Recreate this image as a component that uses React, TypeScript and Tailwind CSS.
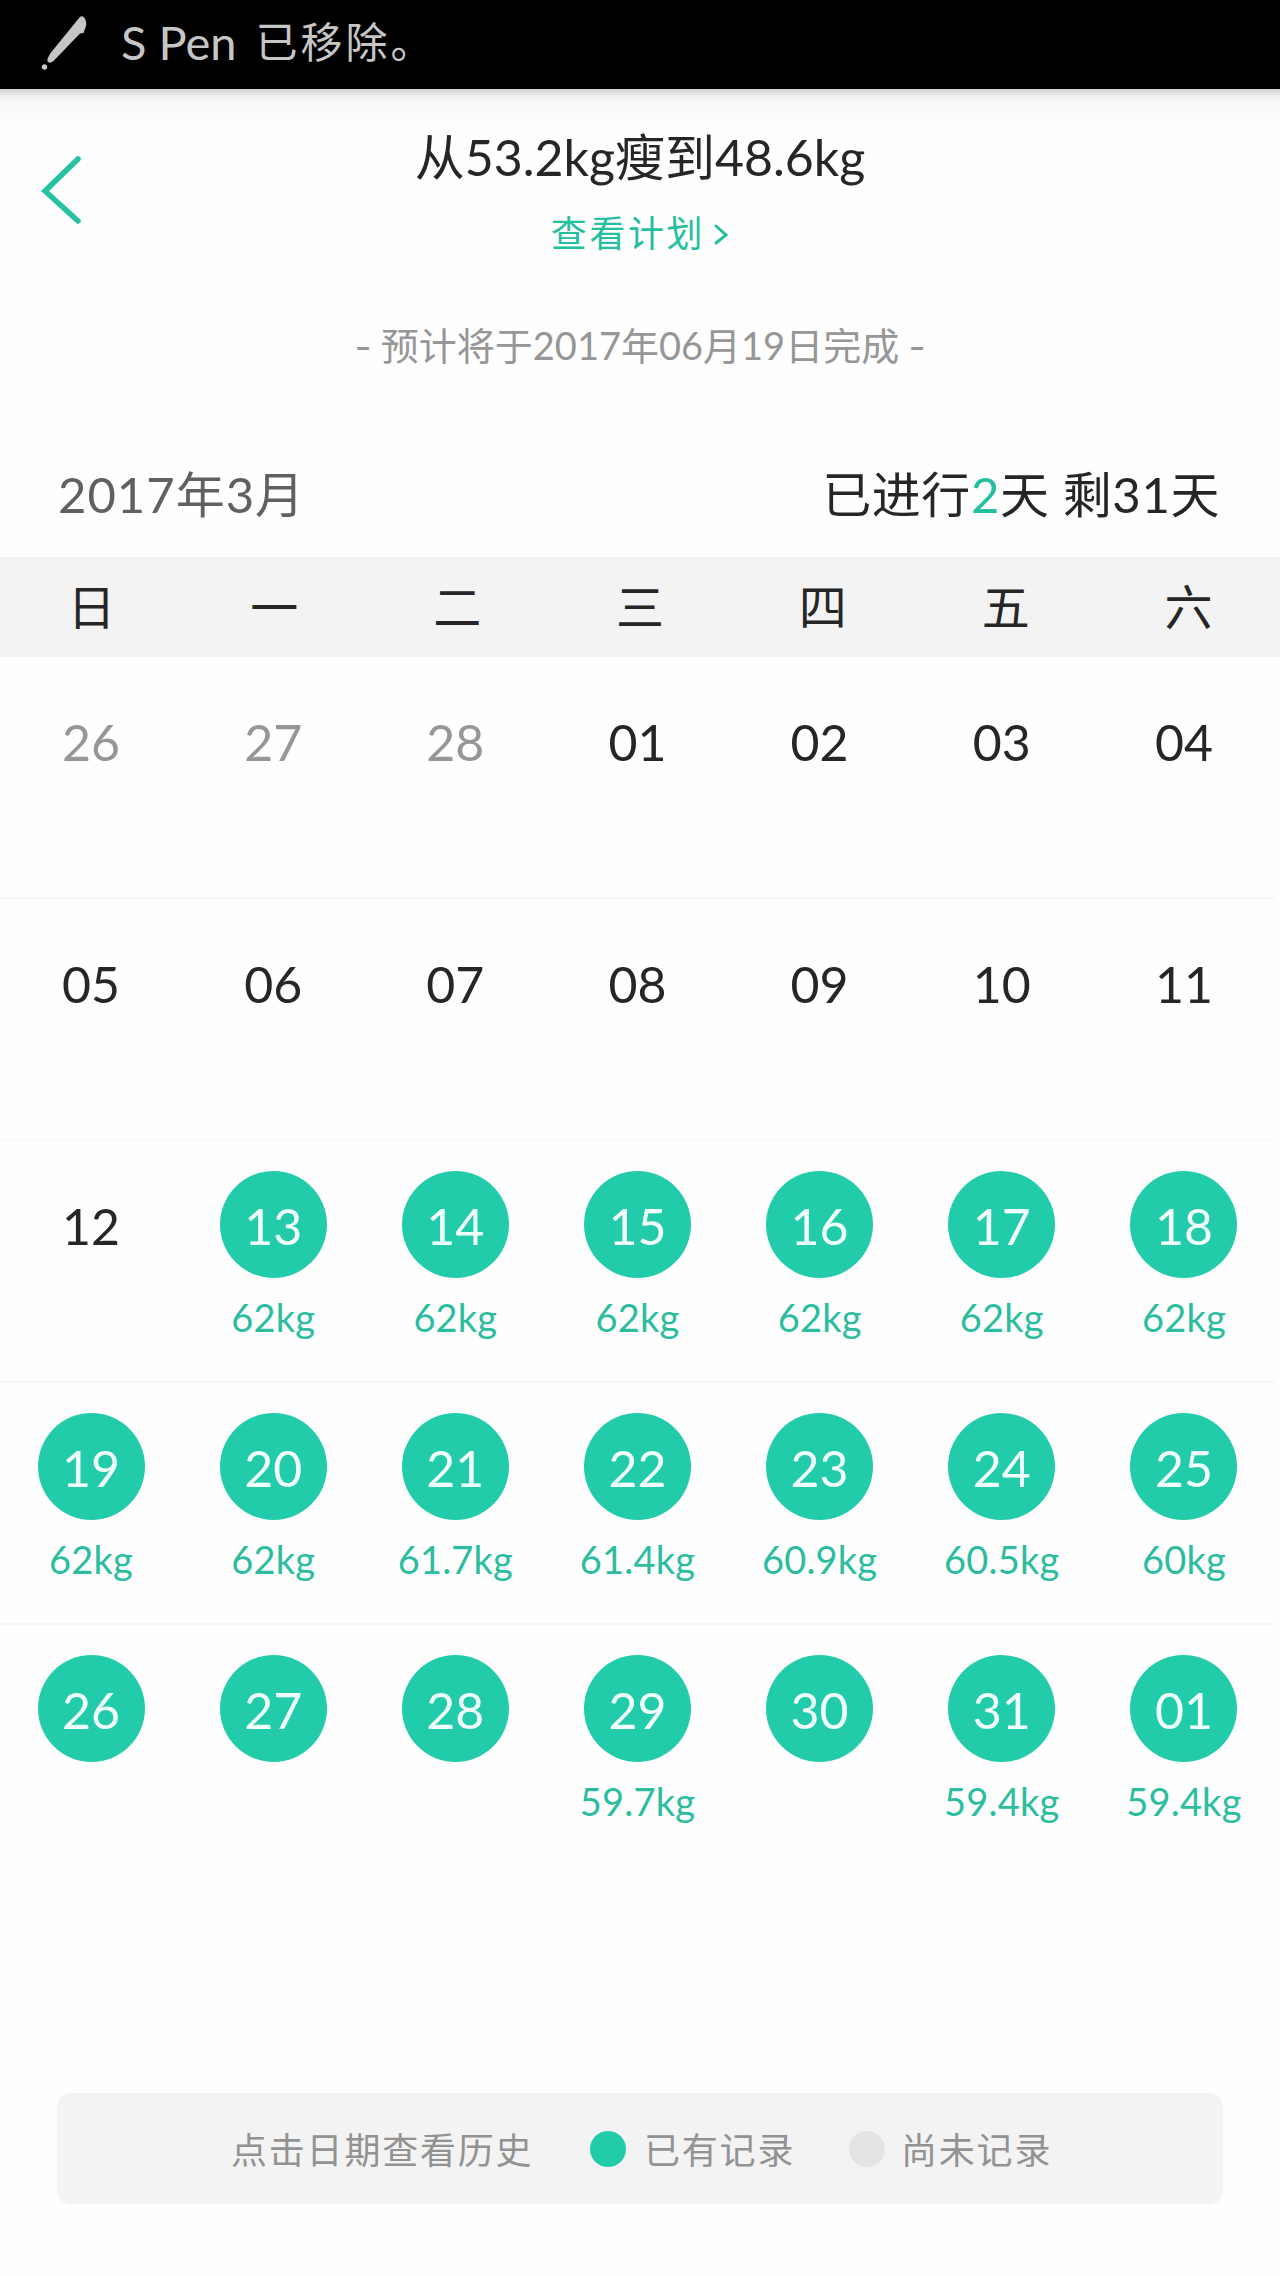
type Day = { d: string; kg?: string; done?: boolean; muted?: boolean };

const weekdays = ['日', '一', '二', '三', '四', '五', '六'];

const weeks: Day[][] = [
    [
        { d: '26', muted: true }, { d: '27', muted: true }, { d: '28', muted: true },
        { d: '01' }, { d: '02' }, { d: '03' }, { d: '04' },
    ],
    [{ d: '05' }, { d: '06' }, { d: '07' }, { d: '08' }, { d: '09' }, { d: '10' }, { d: '11' }],
    [
        { d: '12' },
        { d: '13', kg: '62kg', done: true }, { d: '14', kg: '62kg', done: true },
        { d: '15', kg: '62kg', done: true }, { d: '16', kg: '62kg', done: true },
        { d: '17', kg: '62kg', done: true }, { d: '18', kg: '62kg', done: true },
    ],
    [
        { d: '19', kg: '62kg', done: true }, { d: '20', kg: '62kg', done: true },
        { d: '21', kg: '61.7kg', done: true }, { d: '22', kg: '61.4kg', done: true },
        { d: '23', kg: '60.9kg', done: true }, { d: '24', kg: '60.5kg', done: true },
        { d: '25', kg: '60kg', done: true },
    ],
    [
        { d: '26', done: true }, { d: '27', done: true }, { d: '28', done: true },
        { d: '29', kg: '59.7kg', done: true }, { d: '30', done: true },
        { d: '31', kg: '59.4kg', done: true }, { d: '01', kg: '59.4kg', done: true },
    ],
];

const dividers = ['border-[#f6f6f6]', 'border-[#fbfbfb]', 'border-[#f6f6f6]', 'border-[#f6f6f6]', 'border-transparent'];

function StatusBar() {
    return (
        <div className="h-[89px] bg-black flex items-start text-[#c6c6c6]">
            <svg className="w-[50px] h-[56px] mt-[15px] ml-[40px]" viewBox="0 0 50 56" fill="currentColor">
                <path d="M39.500 2.500 Q42 0 44 2.500 Q47 6 46 11 L43.500 18 L40 18.500 L13.500 46 Q10 49 7.500 46.500 Q7 43 11 37.500 Z" />
                <circle cx="4.500" cy="52" r="2.700" />
            </svg>
            <div className="flex items-center h-[84px] ml-[31px] leading-none whitespace-nowrap">
                <span className="text-[47px]">S Pen</span>
                <span className="text-[42px] tracking-[3px] ml-[19px]">已移除。</span>
            </div>
        </div>
    );
}

function DayCell({ day }: { day: Day }) {
    const color = day.done ? 'bg-[#22ccaa] text-[#f0fffb]' : day.muted ? 'text-[#969696]' : 'text-[#262626]';
    return (
        <div className="flex flex-col items-center pt-[30px]">
            <div className={`w-[107px] h-[107px] pt-[3px] rounded-full flex items-center justify-center text-[50px] leading-none ${color}`}>
                {day.d}
            </div>
            {day.kg && <p className="mt-[20px] text-[38px] leading-[38px] tracking-[0.2px] text-[#2bbd9e]">{day.kg}</p>}
        </div>
    );
}

export default function App() {
    return (
        <div className="w-[1280px] h-[2276px] bg-[#fefefe] flex flex-col overflow-hidden text-[#262626] font-['Lato','Noto_Sans_CJK_SC',sans-serif]">
            <StatusBar />

            {/* Plan header */}
            <div className="h-[468px] shrink-0 flex flex-col bg-[linear-gradient(to_bottom,#d2d2d2_0px,#efefef_7px,#f8f8f8_14px,#fefefe_36px)]">
                <div className="h-[198px] flex items-start">
                    <svg className="w-[42px] h-[72px] mt-[65px] ml-[41px]" viewBox="0 0 42 72" fill="none" stroke="#25c2a2" strokeWidth="5.500" strokeLinecap="round">
                        <path d="M37 5 L4 37 L37 67" />
                    </svg>
                    <div className="w-[1114px] flex flex-col items-center">
                        <h1 className="mt-[42px] text-[50px] leading-[52px] whitespace-nowrap">从53.2kg瘦到48.6kg</h1>
                        <div className="mt-[31px] flex items-center text-[36px] leading-[38px] text-[#25bfa0]">
                            <span className="tracking-[2.6px]">查看计划</span>
                            <svg className="w-[16px] h-[24px] ml-[8px] mt-[4px]" viewBox="0 0 16 24" fill="none" stroke="currentColor" strokeWidth="3" strokeLinecap="round">
                                <path d="M3 3 L13 12 L3 20" />
                            </svg>
                        </div>
                    </div>
                </div>
                <p className="mt-[37px] flex justify-center gap-[11px] text-[38px] leading-[42px] text-[#969696] whitespace-nowrap">
                    <span className="scale-x-125">-</span>
                    <span>预计将于2017年06月19日完成</span>
                    <span className="scale-x-125">-</span>
                </p>
                <div className="mt-auto h-[126px] flex items-center justify-between pl-[58px] pr-[60px] text-[49px] leading-none whitespace-nowrap">
                    <span className="text-[#606060] tracking-[1px]">2017年3月</span>
                    <span className="tracking-[0.6px]">已进行<span className="text-[#25bfa0]">2</span>天 剩31天</span>
                </div>
            </div>

            <div className="h-[100px] shrink-0 grid grid-cols-7 bg-[#f3f3f3] text-[48px] leading-[100px] text-center">
                {weekdays.map(w => <span key={w}>{w}</span>)}
            </div>

            {/* Calendar */}
            <div className="w-[1275px]">
                {weeks.map((week, i) => (
                    <div key={i} className={`h-[242px] grid grid-cols-7 border-b-2 ${dividers[i]}`}>
                        {week.map((day, j) => <DayCell key={j} day={day} />)}
                    </div>
                ))}
            </div>

            {/* Legend */}
            <div className="mt-auto mb-[72px] ml-[57px] w-[1166px] h-[111px] shrink-0 rounded-[14px] bg-[#f3f3f3] flex items-center pl-[174px] text-[36px] leading-none tracking-[1.800px] text-[#929292] whitespace-nowrap">
                <span className="w-[359px] pt-[2px]">点击日期查看历史</span>
                <i className="w-[36px] h-[36px] rounded-full bg-[#22ccaa]" />
                <span className="w-[205px] ml-[18px] pt-[2px]">已有记录</span>
                <i className="w-[36px] h-[36px] rounded-full bg-[#e4e4e4]" />
                <span className="ml-[16px] pt-[2px]">尚未记录</span>
            </div>
        </div>
    );
}
